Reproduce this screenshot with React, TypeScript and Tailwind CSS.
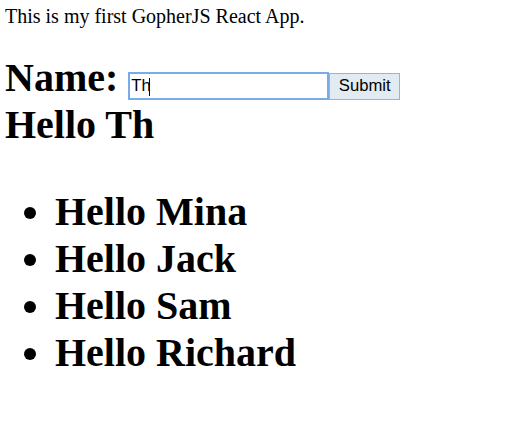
import React from 'react';

const names = ['Mina', 'Jack', 'Sam', 'Richard'];

export default function App() {
  return (
    <div className="min-h-[435px] bg-white pl-[5px] pt-[5px] text-black font-['Liberation_Serif','Times_New_Roman',serif]">
      <div className="text-[20px] leading-[23px]">This is my first GopherJS React App.</div>

      <div className="mt-[26px] text-[40px] font-bold leading-[47px]">
        <div>
          Name:{' '}
          <span className="relative inline-flex align-baseline">
            <input
              readOnly
              value="Th"
              className="box-border h-[28px] w-[201px] border-2 border-[#7aabe9] bg-white pl-px text-[16.67px] font-normal leading-[20px] text-black outline-none font-['Liberation_Sans',Arial,sans-serif]"
            />
            {/* caret */}
            <span className="absolute left-[21px] top-[6px] h-[18px] w-px bg-black" />
          </span>
          <button className="box-border h-[27px] w-[71px] border border-[#d9a867] bg-[#e2ebf2] text-[16.67px] font-normal leading-[20px] text-black align-baseline font-['Liberation_Sans',Arial,sans-serif]">
            Submit
          </button>
        </div>
        <div>Hello Th</div>
      </div>

      <ul className="mt-[40px] list-disc pl-[50px] text-[40px] font-bold leading-[47px]">
        {names.map((n) => (
          <li key={n}>Hello {n}</li>
        ))}
      </ul>
    </div>
  );
}
